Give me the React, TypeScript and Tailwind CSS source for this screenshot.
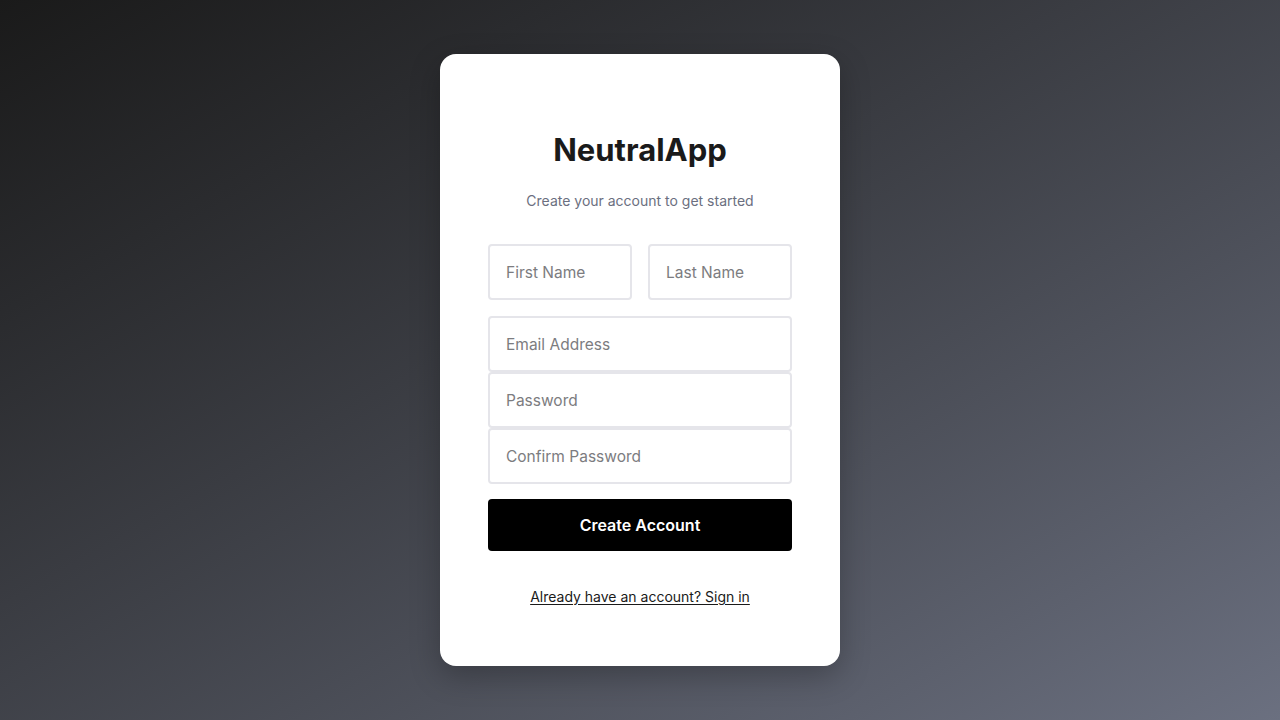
export default function App() {
  const inputClass =
    "h-14 w-full rounded border-2 border-[#e5e5ea] bg-white px-4 text-[15.5px] text-[#1a1a1a] outline-none placeholder:text-[#7c7c80]";

  return (
    <div
      className="flex min-h-screen items-center justify-center bg-gradient-to-br from-[#1a1a1a] to-[#6b7080]"
      style={{ fontFamily: "Inter, 'Noto Sans', sans-serif" }}
    >
      <div className="w-[400px] rounded-2xl bg-white px-12 pt-[76px] pb-[58px] shadow-[0_10px_30px_rgba(0,0,0,0.25)]">
        <h1 className="text-center text-[31px] leading-10 font-bold text-[#1a1a1a]">
          NeutralApp
        </h1>
        <p className="mt-[21px] text-center text-sm leading-5 text-[#6b6f80]">
          Create your account to get started
        </p>

        <form className="mt-[33px]" onSubmit={(e) => e.preventDefault()}>
          <div className="flex gap-4">
            <input className={inputClass} placeholder="First Name" />
            <input className={inputClass} placeholder="Last Name" />
          </div>
          <div className="mt-4 flex flex-col">
            <input className={inputClass} placeholder="Email Address" />
            <input
              type="password"
              className={inputClass}
              placeholder="Password"
            />
            <input
              type="password"
              className={inputClass}
              placeholder="Confirm Password"
            />
          </div>
          <button
            type="submit"
            className="mt-[15px] h-[52px] w-full rounded bg-black text-base font-semibold text-white"
          >
            Create Account
          </button>
        </form>

        <div className="mt-[33px] text-center">
          <a
            href="#"
            className="text-sm leading-5 text-[#1a1a1a] underline underline-offset-2"
          >
            Already have an account? Sign in
          </a>
        </div>
      </div>
    </div>
  );
}
